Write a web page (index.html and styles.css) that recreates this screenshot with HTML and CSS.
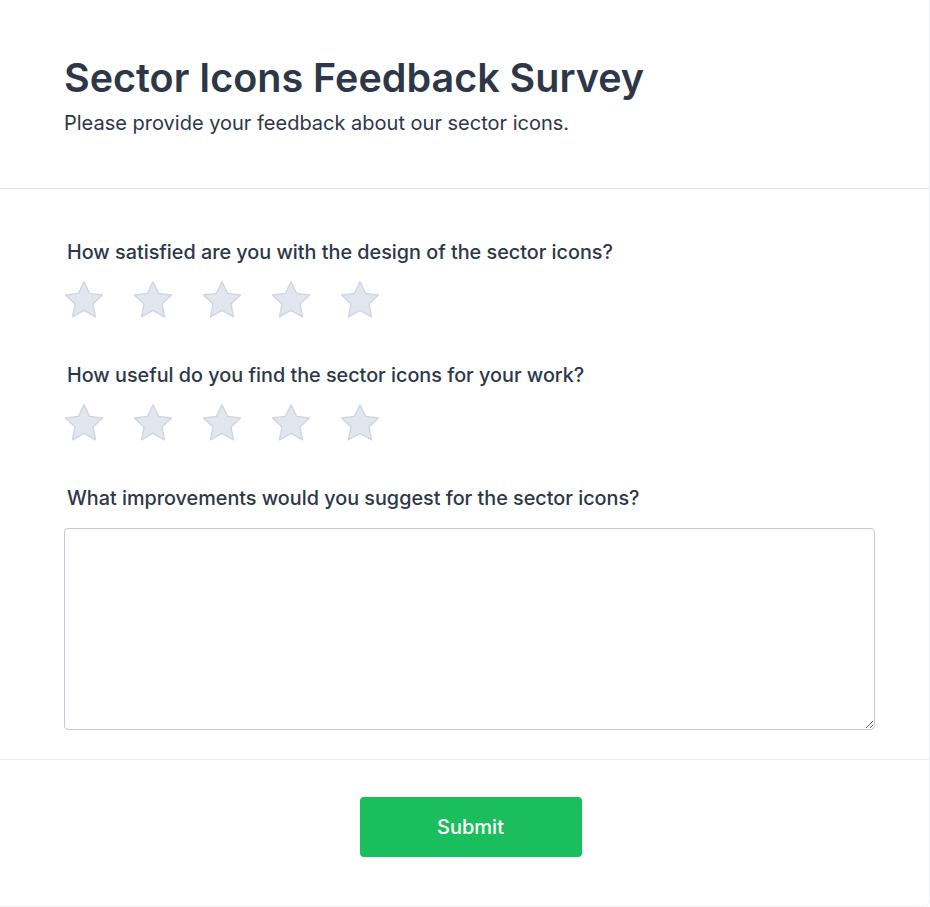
FILE: index.html
```html
<!DOCTYPE html>
<html lang="en">
<head>
<meta charset="utf-8">
<title>Sector Icons Feedback Survey</title>
<link rel="stylesheet" href="styles.css">
</head>
<body>
<div class="card">
  <header class="card-header">
    <h1 class="title">Sector Icons Feedback Survey</h1>
    <p class="subtitle">Please provide your feedback about our sector icons.</p>
  </header>
  <main class="card-body">
    <div class="question">
      <label class="q-label">How satisfied are you with the design of the sector icons?</label>
      <div class="stars">
        <svg class="star" viewBox="0 0 40 38"><path d="M20 .8L25.5 12.4 38.5 14 28.9 22.9 31.5 35.8 20 29.4 8.5 35.8 11.1 22.9 1.5 14 14.5 12.4z"/></svg>
        <svg class="star" viewBox="0 0 40 38"><path d="M20 .8L25.5 12.4 38.5 14 28.9 22.9 31.5 35.8 20 29.4 8.5 35.8 11.1 22.9 1.5 14 14.5 12.4z"/></svg>
        <svg class="star" viewBox="0 0 40 38"><path d="M20 .8L25.5 12.4 38.5 14 28.9 22.9 31.5 35.8 20 29.4 8.5 35.8 11.1 22.9 1.5 14 14.5 12.4z"/></svg>
        <svg class="star" viewBox="0 0 40 38"><path d="M20 .8L25.5 12.4 38.5 14 28.9 22.9 31.5 35.8 20 29.4 8.5 35.8 11.1 22.9 1.5 14 14.5 12.4z"/></svg>
        <svg class="star" viewBox="0 0 40 38"><path d="M20 .8L25.5 12.4 38.5 14 28.9 22.9 31.5 35.8 20 29.4 8.5 35.8 11.1 22.9 1.5 14 14.5 12.4z"/></svg>
      </div>
    </div>
    <div class="question">
      <label class="q-label">How useful do you find the sector icons for your work?</label>
      <div class="stars">
        <svg class="star" viewBox="0 0 40 38"><path d="M20 .8L25.5 12.4 38.5 14 28.9 22.9 31.5 35.8 20 29.4 8.5 35.8 11.1 22.9 1.5 14 14.5 12.4z"/></svg>
        <svg class="star" viewBox="0 0 40 38"><path d="M20 .8L25.5 12.4 38.5 14 28.9 22.9 31.5 35.8 20 29.4 8.5 35.8 11.1 22.9 1.5 14 14.5 12.4z"/></svg>
        <svg class="star" viewBox="0 0 40 38"><path d="M20 .8L25.5 12.4 38.5 14 28.9 22.9 31.5 35.8 20 29.4 8.5 35.8 11.1 22.9 1.5 14 14.5 12.4z"/></svg>
        <svg class="star" viewBox="0 0 40 38"><path d="M20 .8L25.5 12.4 38.5 14 28.9 22.9 31.5 35.8 20 29.4 8.5 35.8 11.1 22.9 1.5 14 14.5 12.4z"/></svg>
        <svg class="star" viewBox="0 0 40 38"><path d="M20 .8L25.5 12.4 38.5 14 28.9 22.9 31.5 35.8 20 29.4 8.5 35.8 11.1 22.9 1.5 14 14.5 12.4z"/></svg>
      </div>
    </div>
    <div class="question">
      <label class="q-label">What improvements would you suggest for the sector icons?</label>
      <textarea class="answer"></textarea>
    </div>
  </main>
  <footer class="card-footer">
    <button class="submit" type="button">Submit</button>
  </footer>
</div>
</body>
</html>
```
FILE: styles.css
```css
* { box-sizing: border-box; }
html, body { margin: 0; padding: 0; background: #ffffff; }
body { font-family: Inter, "Noto Sans", sans-serif; color: #2d3748; }
.card {
  width: 930px;
  height: 907px;
  border-right: 1px solid #eef0f4;
  border-bottom: 1px solid #eef0f4;
  border-bottom-right-radius: 6px;
  display: flex;
  flex-direction: column;
}
.card-header {
  padding: 54px 64px 51px;
  border-bottom: 1px solid #e2e4ee;
}
.title {
  margin: 0;
  font-size: 39.5px;
  line-height: 48px;
  font-weight: 600;
  color: #2d3748;
}
.subtitle {
  margin: 7px 0 0;
  font-size: 20px;
  line-height: 28px;
  font-weight: 400;
  color: #2d3748;
}
.card-body {
  padding: 49px 54px 29px 64px;
  display: flex;
  flex-direction: column;
  gap: 42px;
  border-bottom: 1px solid #eceef3;
}
.question { display: flex; flex-direction: column; }
.q-label {
  padding-left: 3px;
  font-size: 19.8px;
  line-height: 28px;
  font-weight: 500;
  color: #2d3748;
}
.stars { display: flex; gap: 29px; margin-top: 15px; }
.star { width: 40px; height: 38px; }
.star path {
  fill: #e2e6ef;
  stroke: #d0d5e1;
  stroke-width: 1.4;
  stroke-linejoin: round;
}
.answer {
  margin-top: 16px;
  width: 811px;
  height: 202px;
  border: 1px solid #c3c8d6;
  border-radius: 4px;
  font-family: inherit;
  font-size: 16px;
  padding: 8px;
}
.card-footer {
  flex: 1;
  display: flex;
  justify-content: center;
  align-items: flex-start;
  padding: 37px 0 0 12px;
}
.submit {
  width: 222px;
  height: 60px;
  border: none;
  border-radius: 4px;
  background: #1bbe5d;
  color: #ffffff;
  font-family: inherit;
  font-size: 20px;
  font-weight: 500;
}
```
